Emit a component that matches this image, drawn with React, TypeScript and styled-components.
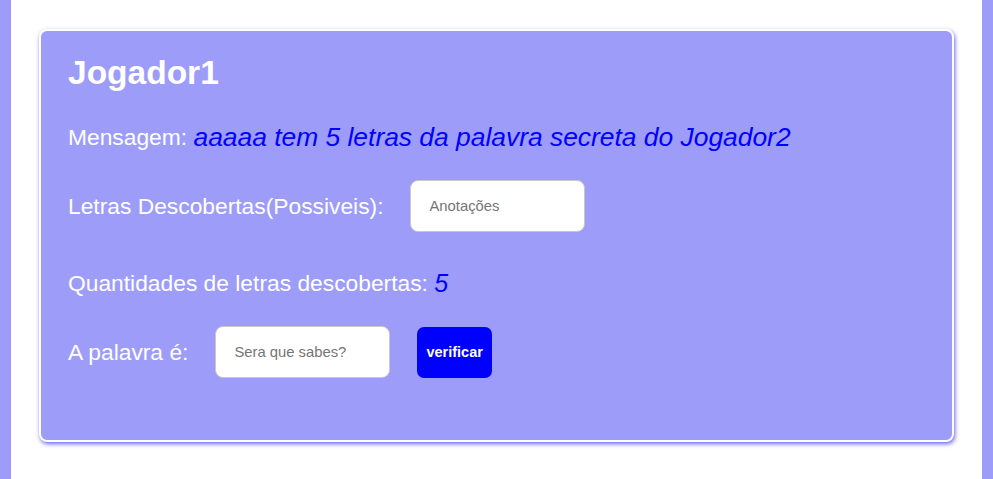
import React from "react";
import styled, { createGlobalStyle } from "styled-components";

const Global = createGlobalStyle`
  html, body {
    margin: 0;
    padding: 0;
    background: #9d9cf9;
    font-family: "Liberation Sans", Arial, sans-serif;
  }
`;

const Page = styled.div`
  margin: 0 11px;
  background: #ffffff;
  min-height: 479px;
  padding: 29px 28px 0 28px;
  box-sizing: border-box;
`;

const Card = styled.div`
  background: #9d9cf9;
  border: 2px solid #ffffff;
  border-radius: 8px;
  box-shadow: 1px 2px 4px rgba(90, 88, 245, 0.9);
  padding: 23px 27px 62px 27px;
  display: flex;
  flex-direction: column;
  color: #ffffff;
`;

const Title = styled.h1`
  margin: 0;
  font-size: 33.5px;
  line-height: 37px;
  font-weight: bold;
  color: #ffffff;
`;

const Row = styled.div<{ $mt: number; $gap?: number }>`
  display: flex;
  align-items: center;
  gap: ${(p) => p.$gap ?? 0}px;
  margin-top: ${(p) => p.$mt}px;
  font-size: 22.8px;
  line-height: 28px;
  min-height: 28px;
`;

const Label = styled.span`
  color: #ffffff;
  font-size: 22.8px;
`;

const Value = styled.span<{ $size?: number }>`
  color: #0000ff;
  font-style: italic;
  font-size: ${(p) => p.$size ?? 26.4}px;
`;

const TextInput = styled.input`
  width: 175px;
  height: 52px;
  box-sizing: border-box;
  border: 1px solid #c8c8c8;
  border-radius: 8px;
  background: #ffffff;
  padding: 0 18px;
  font-family: "Liberation Sans", Arial, sans-serif;
  font-size: 14.8px;
  color: #333;
  outline: none;
  &::placeholder {
    color: #757575;
  }
`;

const VerifyButton = styled.button`
  height: 51px;
  padding: 0 9px;
  border: none;
  border-radius: 7px;
  background: #0000ff;
  color: #ffffff;
  font-family: "Liberation Sans", Arial, sans-serif;
  font-weight: bold;
  font-size: 14.5px;
  cursor: pointer;
`;

export default function App() {
  return (
    <>
      <Global />
      <Page>
        <Card>
          <Title>Jogador1</Title>
          <Row $mt={32}>
            <Label>Mensagem:&nbsp;</Label>
            <Value>aaaaa tem 5 letras da palavra secreta do Jogador2</Value>
          </Row>
          <Row $mt={29} $gap={27}>
            <Label>Letras Descobertas(Possiveis):</Label>
            <TextInput placeholder="Anotações" />
          </Row>
          <Row $mt={37}>
            <Label>Quantidades de letras descobertas:&nbsp;</Label>
            <Value $size={25}>5</Value>
          </Row>
          <Row $mt={29} $gap={27}>
            <Label>A palavra é:</Label>
            <TextInput placeholder="Sera que sabes?" />
            <VerifyButton>verificar</VerifyButton>
          </Row>
        </Card>
      </Page>
    </>
  );
}
